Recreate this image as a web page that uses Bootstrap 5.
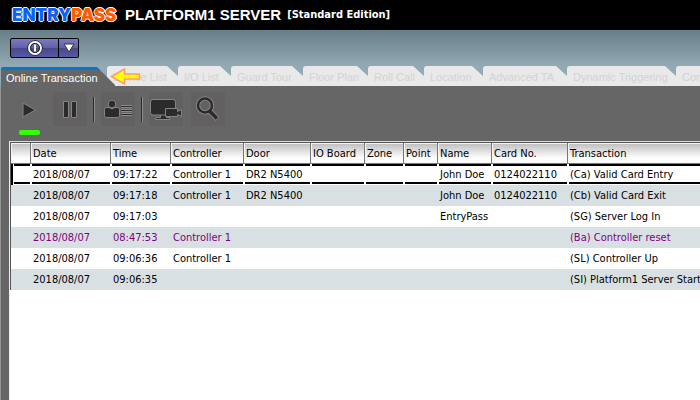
<!DOCTYPE html>
<html lang="en">
<head>
<meta charset="utf-8">
<meta name="viewport" content="width=device-width, initial-scale=1">
<title>EntryPass Platform1 Server</title>
<link href="https://cdn.jsdelivr.net/npm/bootstrap@5.3.0/dist/css/bootstrap.min.css" rel="stylesheet">
<style>
body{font-family:"DejaVu Sans Condensed","Noto Sans",sans-serif;font-size:11px;line-height:16px;background:#666;color:#000}
.titlebar{height:30px;background:#000;color:#fff;padding-left:12px}
.brand{font:900 17px/18px "Inter",sans-serif;color:#0a62f5;width:105px;margin-right:8px;text-shadow:1px 0 #fff,-1px 0 #fff,0 1px #fff,0 -1px #fff}
.brand span{color:#ff5a00}
.product{font:bold 15px/18px "Liberation Sans",sans-serif;margin-right:6px}
.edition{font-weight:700}
.ribbon{height:56px;background:linear-gradient(#687e89,#93aab4 36px)}
.power{margin:8px 0 0 10px}
.power .btn{height:20px;padding:0;border:1px solid #000;border-radius:2px;color:#fff;background:linear-gradient(#7b7bc0,#6060a8 50%,#48488c 50%,#5858a4)}
.power .main{width:49px}
.power .drop{width:20px}
.tabstrip{height:20px;padding-left:1px;font-family:"Liberation Sans",sans-serif;line-height:14px}
.tabstrip .nav-link{height:20px;padding:4px 0 0 6px;border:0;color:#d3d3d3;border-radius:3px 0 0 0;background:#e9e9e9;clip-path:polygon(0 0,calc(100% - 11px) 0,100% 10px,100% 100%,0 100%)}
.tabstrip .nav-link.active{height:19px;padding:1px 0 0 5px;width:114px;margin-right:-8px;color:#fff;background:#666;border-top:3px solid #0078d4;border-radius:2px 0 0 0;position:relative;z-index:1;clip-path:polygon(0 0,96px 0,100% 18px,100% 100%,0 100%)}
.t71{width:71px}.t53{width:53px}.t72{width:72px}.t65{width:65px}.t56{width:56px}.t59{width:59px}.t84{width:84px}.t109{width:109px}
.pointer{position:absolute;left:110px;top:1px;z-index:2}
.workspace{border-left:1px solid #949494}
.tools{padding:6px 0 0 10px;height:55px}
.tools button{display:block;width:34px;height:34px;border:0;padding:0;background:#626061}
.tools button.play{background:none}
.tools svg{display:block}
.running{width:21px;height:5px;margin:4px 0 0 8px;border-radius:2px;background:#3f0}
.split{width:2px;height:25px;margin:5px 6px 0;background:#2e2e2e;border-right:1px solid #8a8a8a}
.grid-pane{margin-left:8px;background:#fff;border-left:1px solid #eee;border-top:1px solid #ddd;overflow:hidden;min-height:calc(100vh - 141px)}
.log{table-layout:fixed;width:789px;border-collapse:separate;border-spacing:0;border-left:1px solid #555;border-top:1px solid #555}
.log .c20{width:20px}.log .c80{width:80px}.log .c60{width:60px}.log .c73{width:73px}.log .c67{width:67px}.log .c54{width:54px}.log .c39{width:39px}.log .c34{width:34px}.log .c76{width:76px}
.log th{height:21px;padding:1px 0 0 2px;font-weight:400;white-space:nowrap;background:linear-gradient(#bdbdbd,#fdfdfd 75%);border-right:1px solid #777;border-bottom:1px solid #777;box-shadow:inset 1px 1px #f4f4f4}
.log td{height:21px;padding:0 0 0 2px;white-space:nowrap}
.log tr:nth-child(even) td{background:#d9e0e3}
.log tr.picked td{background:linear-gradient(#000,#000) 1px 0/calc(100% - 2px) 2px no-repeat,linear-gradient(#000,#000) 1px 18px/calc(100% - 2px) 2px no-repeat,#fff}
.log tr.picked td:first-child{border-left:2px solid #000}
.log tr.alarm td{color:#800080}
</style>
<script src="https://cdn.jsdelivr.net/npm/bootstrap@5.3.0/dist/js/bootstrap.bundle.min.js"></script>
</head>
<body class="overflow-hidden">
<header class="titlebar d-flex align-items-center text-nowrap">
<div class="brand">ENTRY<span>PASS</span></div><h1 class="product mb-0">PLATFORM1 SERVER</h1><span class="edition">[Standard Edition]</span>
</header>
<div class="ribbon d-flex flex-column overflow-hidden">
<div class="power d-flex">
<button class="btn main rounded-end-0 d-flex align-items-center justify-content-center" type="button" aria-label="Power"><svg width="16" height="16" viewBox="0 0 16 16" fill="none" stroke="#fff"><circle cx="8" cy="8" r="7.3" stroke="#222"/><circle cx="8" cy="8" r="6" stroke-width="1.8"/><circle cx="8" cy="8" r="4.5" stroke="#222"/><path d="M8 4.5v7" stroke-width="2"/></svg></button>
<button class="btn drop rounded-start-0 border-start-0 d-flex align-items-center justify-content-center" type="button" aria-label="Power options"><svg width="12" height="10" viewBox="0 0 12 10"><path d="M1 1h10L6 9z" fill="#fff" stroke="#333"/></svg></button>
</div>
<nav class="tabstrip nav flex-nowrap align-items-end text-nowrap position-relative mt-auto" aria-label="Views">
<a class="nav-link active flex-shrink-0" href="#" aria-current="page">Online Transaction</a>
<a class="nav-link flex-shrink-0 t71" href="#">Device List</a>
<a class="nav-link flex-shrink-0 t53" href="#">I/O List</a>
<a class="nav-link flex-shrink-0 t72" href="#">Guard Tour</a>
<a class="nav-link flex-shrink-0 t65" href="#">Floor Plan</a>
<a class="nav-link flex-shrink-0 t56" href="#">Roll Call</a>
<a class="nav-link flex-shrink-0 t59" href="#">Location</a>
<a class="nav-link flex-shrink-0 t84" href="#">Advanced TA</a>
<a class="nav-link flex-shrink-0 t109" href="#">Dynamic Triggering</a>
<a class="nav-link flex-shrink-0 t71" href="#">Con</a>
<svg class="pointer" width="31" height="18" viewBox="0 0 31 18" aria-hidden="true"><path d="M1.500 9.500 14.500 2v5H29.500v5H14.500v5z" fill="#ff0" stroke="#ff9a70" stroke-width="1.500"/></svg>
</nav>
</div>
<main class="workspace">
<div class="tools d-flex align-items-start">
<div><button class="play" type="button" aria-label="Play"><svg width="34" height="34" viewBox="0 0 34 34"><path d="M12 11v14l12.500-7z" fill="#2b2b2b" stroke="#858585"/></svg></button><div class="running"></div></div>
<button class="ms-2" type="button" aria-label="Pause"><svg width="34" height="34" viewBox="0 0 34 34"><path d="M10.500 9.500h5v16h-5zM18.500 9.500h5v16h-5z" fill="#2b2b2b" stroke="#858585"/></svg></button>
<div class="split"></div>
<button type="button" aria-label="Card holders"><svg width="34" height="34" viewBox="0 0 34 34"><path d="M5.500 15.500h2.500q3 2.500 6 0h2.500q2 0 2 2v6q0 2-2 2h-11q-2 0-2-2v-6q0-2 2-2z" fill="#2b2b2b" stroke="#858585"/><circle cx="11" cy="12" r="3.800" fill="#2b2b2b" stroke="#858585"/><path d="M20 14.500h11M20 18.500h11M20 22.500h11" stroke="#8d8d8d" stroke-width="3"/><path d="M20 14.500h11M20 18.500h11M20 22.500h11" stroke="#2b2b2b"/></svg></button>
<div class="split"></div>
<button type="button" aria-label="Live video"><svg width="34" height="34" viewBox="0 0 34 34"><g fill="#2b2b2b" stroke="#858585"><path d="M11.500 22.500h6v3h3v2h-14v-2h5z"/><rect x="1.500" y="7.500" width="25" height="15.500" rx="2.500"/><path d="M16.500 16.500h12v3l4-2v7l-4-2v2h-12z"/></g></svg></button>
<button class="ms-2" type="button" aria-label="Search"><svg width="34" height="34" viewBox="0 0 34 34" fill="none"><path d="m18.500 19 8 8" stroke="#858585" stroke-width="5.500"/><circle cx="14" cy="13.500" r="7" stroke="#858585" stroke-width="4.500"/><path d="m18.500 19 7.500 7.500" stroke="#2b2b2b" stroke-width="3.500"/><circle cx="14" cy="13.500" r="7" stroke="#2b2b2b" stroke-width="2.500"/></svg></button>
</div>
<div class="grid-pane">
<table class="log">
<colgroup><col class="c20"><col class="c80"><col class="c60"><col class="c73"><col class="c67"><col class="c54"><col class="c39"><col class="c34"><col class="c54"><col class="c76"><col></colgroup>
<thead><tr><th></th><th>Date</th><th>Time</th><th>Controller</th><th>Door</th><th>IO Board</th><th>Zone</th><th>Point</th><th>Name</th><th>Card No.</th><th>Transaction</th></tr></thead>
<tbody>
<tr class="picked"><td></td><td>2018/08/07</td><td>09:17:22</td><td>Controller 1</td><td>DR2 N5400</td><td></td><td></td><td></td><td>John Doe</td><td>0124022110</td><td>(Ca) Valid Card Entry</td></tr>
<tr><td></td><td>2018/08/07</td><td>09:17:18</td><td>Controller 1</td><td>DR2 N5400</td><td></td><td></td><td></td><td>John Doe</td><td>0124022110</td><td>(Cb) Valid Card Exit</td></tr>
<tr><td></td><td>2018/08/07</td><td>09:17:03</td><td></td><td></td><td></td><td></td><td></td><td>EntryPass</td><td></td><td>(SG) Server Log In</td></tr>
<tr class="alarm"><td></td><td>2018/08/07</td><td>08:47:53</td><td>Controller 1</td><td></td><td></td><td></td><td></td><td></td><td></td><td>(Ba) Controller reset</td></tr>
<tr><td></td><td>2018/08/07</td><td>09:06:36</td><td>Controller 1</td><td></td><td></td><td></td><td></td><td></td><td></td><td>(SL) Controller Up</td></tr>
<tr><td></td><td>2018/08/07</td><td>09:06:35</td><td></td><td></td><td></td><td></td><td></td><td></td><td></td><td>(SI) Platform1 Server Start</td></tr>
</tbody>
</table>
</div>
</main>
</body>
</html>
